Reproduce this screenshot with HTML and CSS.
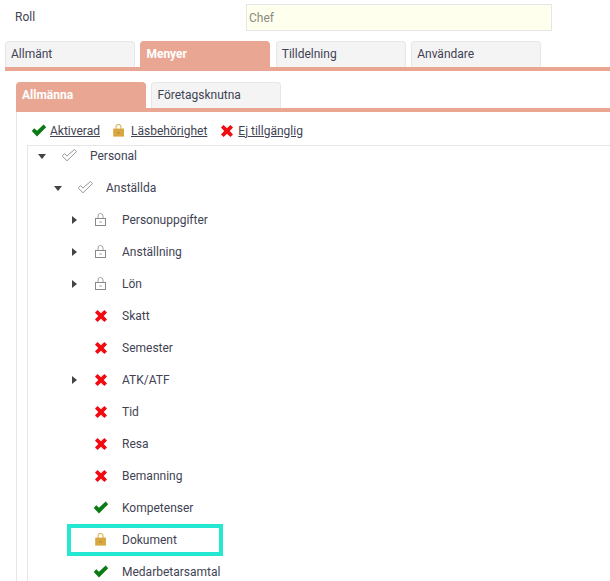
FILE: index.html
```html
<!DOCTYPE html>
<html lang="sv">
<head>
<meta charset="utf-8">
<title>Roll</title>
<link rel="stylesheet" href="styles.css">
</head>
<body>
<svg class="defs" width="0" height="0" aria-hidden="true">
  <defs>
    <symbol id="ok" viewBox="0 0 16 14"><path d="M.8 7 L3.2 4.2 L6 6.8 L12.6 .6 L15.2 3.2 L6 12.4 Z" fill="#0a7a14"/></symbol>
    <symbol id="no" viewBox="0 0 14 14"><path d="M3.6 1 L7 4.2 L10.4 1 L13 3.6 L9.8 7 L13 10.4 L10.4 13 L7 9.8 L3.6 13 L1 10.4 L4.2 7 L1 3.6 Z" fill="#f00d12"/></symbol>
    <symbol id="lock" viewBox="0 0 12 14"><path d="M3 5 V3 a2.5 2.5 0 0 1 5 0 V5" fill="none" stroke="#dfb865" stroke-width="1.2"/><rect x="0.2" y="4.6" width="10.8" height="8" fill="#d9a73f"/><rect x="4" y="8" width="3" height="1.4" fill="#c4922f"/></symbol>
    <symbol id="lockline" viewBox="0 0 12 14"><path d="M3 5.5 V3 a2.5 2.5 0 0 1 5 0 V5.5" fill="none" stroke="#a0a0a0" stroke-width="1"/><rect x="0.5" y="5.5" width="10" height="7" fill="#fff" stroke="#888" stroke-width="1"/><rect x="4" y="8.5" width="3" height="1" fill="#aaa"/></symbol>
    <symbol id="okline" viewBox="0 0 16 14"><path d="M1.2 7 L3.5 4.6 L6 7 L13.5 .4 L15.6 2.6 L6 11.8 Z" fill="#fff" stroke="#999" stroke-width="1"/></symbol>
  </defs>
</svg>
<main class="page">
  <div class="role-row">
    <label class="role-label" for="role">Roll</label>
    <input class="role-input" id="role" value="Chef" readonly>
  </div>
  <nav class="tabs">
    <a class="tab">Allmänt</a>
    <a class="tab tab-active">Menyer</a>
    <a class="tab">Tilldelning</a>
    <a class="tab">Användare</a>
  </nav>
  <section class="panel">
    <nav class="tabs subtabs">
      <a class="tab tab-active">Allmänna</a>
      <a class="tab">Företagsknutna</a>
    </nav>
    <div class="subpanel">
      <div class="legend">
        <span class="legend-item"><svg class="ic ic-ok"><use href="#ok"/></svg><u>Aktiverad</u></span>
        <span class="legend-item"><svg class="ic ic-lock"><use href="#lock"/></svg><u>Läsbehörighet</u></span>
        <span class="legend-item"><svg class="ic ic-no"><use href="#no"/></svg><u>Ej tillgänglig</u></span>
      </div>
      <div class="tree">
        <div class="row l1"><span class="slot"><i class="tg down"></i></span><span class="icon"><svg class="ic ic-ok"><use href="#okline"/></svg></span><span>Personal</span></div>
        <div class="row l2"><span class="slot"><i class="tg down"></i></span><span class="icon"><svg class="ic ic-ok"><use href="#okline"/></svg></span><span>Anställda</span></div>
        <div class="row l3"><span class="slot"><i class="tg right"></i></span><span class="icon"><svg class="ic ic-lock"><use href="#lockline"/></svg></span><span>Personuppgifter</span></div>
        <div class="row l3"><span class="slot"><i class="tg right"></i></span><span class="icon"><svg class="ic ic-lock"><use href="#lockline"/></svg></span><span>Anställning</span></div>
        <div class="row l3"><span class="slot"><i class="tg right"></i></span><span class="icon"><svg class="ic ic-lock"><use href="#lockline"/></svg></span><span>Lön</span></div>
        <div class="row l3"><span class="slot"></span><span class="icon"><svg class="ic ic-no"><use href="#no"/></svg></span><span>Skatt</span></div>
        <div class="row l3"><span class="slot"></span><span class="icon"><svg class="ic ic-no"><use href="#no"/></svg></span><span>Semester</span></div>
        <div class="row l3"><span class="slot"><i class="tg right"></i></span><span class="icon"><svg class="ic ic-no"><use href="#no"/></svg></span><span>ATK/ATF</span></div>
        <div class="row l3"><span class="slot"></span><span class="icon"><svg class="ic ic-no"><use href="#no"/></svg></span><span>Tid</span></div>
        <div class="row l3"><span class="slot"></span><span class="icon"><svg class="ic ic-no"><use href="#no"/></svg></span><span>Resa</span></div>
        <div class="row l3"><span class="slot"></span><span class="icon"><svg class="ic ic-no"><use href="#no"/></svg></span><span>Bemanning</span></div>
        <div class="row l3"><span class="slot"></span><span class="icon"><svg class="ic ic-ok"><use href="#ok"/></svg></span><span>Kompetenser</span></div>
        <div class="row l3 marked"><span class="slot"></span><span class="icon"><svg class="ic ic-lock"><use href="#lock"/></svg></span><span>Dokument</span></div>
        <div class="row l3"><span class="slot"></span><span class="icon"><svg class="ic ic-ok"><use href="#ok"/></svg></span><span>Medarbetarsamtal</span></div>
      </div>
    </div>
  </section>
</main>
</body>
</html>
```
FILE: styles.css
```css
html, body {
  margin: 0;
  height: 581px;
  overflow: hidden;
  background: #fff;
}
body {
  font-family: Roboto, "Liberation Sans", sans-serif;
  font-size: 12px;
  color: #3f4354;
}
.defs { position: absolute; }
.page { padding: 4px 0 0 5px; }
.role-row { display: flex; align-items: center; height: 27px; }
.role-label { width: 241px; padding: 0 0 1px 10px; box-sizing: border-box; }
.role-input {
  width: 306px;
  height: 27px;
  box-sizing: border-box;
  border: 1px solid #e6e6e6;
  background: #ffffee;
  padding: 0 2px;
  font: inherit;
  color: #8a8a80;
  outline: 0;
}
.tabs {
  display: flex;
  gap: 5.4px;
  height: 26px;
  margin-top: 10px;
  border-bottom: 4px solid #e9a793;
}
.tab {
  width: 130px;
  height: 26px;
  box-sizing: border-box;
  background: #f4f4f4;
  border: 1px solid #e6e6e6;
  border-bottom: 0;
  border-radius: 4px 4px 0 0;
  padding: 4px 0 0 5px;
  line-height: 16px;
}
.tab-active {
  background: #e9a793;
  border-color: #e9a793;
  color: #fff;
  font-weight: 700;
}
.panel { padding: 11px 0 0 11px; }
.subtabs { margin-top: 0; }
.subpanel {
  border-left: 1px solid #e6e6e6;
  padding-left: 10px;
}
.legend {
  display: flex;
  gap: 13px;
  height: 33px;
  align-items: center;
  padding: 4px 0 0 4px;
  box-sizing: border-box;
}
.legend-item { display: flex; align-items: center; }
.legend-item u { line-height: 14px; }
.legend .ic-ok { margin-right: 3px; }
.legend .ic-lock { margin-right: 6px; }
.legend .ic-no { margin-right: 4px; }
.tree { border: 1px solid #e6e6e6; border-right: 0; border-bottom: 0; }
.row {
  display: flex;
  align-items: center;
  height: 32px;
  box-sizing: border-box;
}
.row:first-child { margin-top: -6px; }
.l1 { padding-left: 10px; }
.l2 { padding-left: 26px; }
.l3 { padding-left: 42px; }
.slot { flex: none; width: 23px; display: flex; align-items: center; }
.icon { flex: none; width: 16px; margin-right: 13px; display: flex; justify-content: center; }
.ic { display: block; flex: none; }
.tg { display: block; box-sizing: border-box; width: 0; height: 0; }
.tg.down {
  border-top: 5px solid #444;
  border-left: 4px solid transparent;
  border-right: 4px solid transparent;
}
.tg.right {
  margin-left: 2px;
  border-left: 5px solid #444;
  border-top: 4.5px solid transparent;
  border-bottom: 4.5px solid transparent;
}
.ic-ok { width: 16px; height: 14px; }
.ic-no { width: 14px; height: 14px; }
.ic-lock { width: 12px; height: 14px; }
.marked { position: relative; }
.marked::after {
  content: "";
  position: absolute;
  left: 39px;
  top: 0;
  width: 156px;
  height: 32px;
  box-sizing: border-box;
  border: 4px solid #25e8d2;
}
```
